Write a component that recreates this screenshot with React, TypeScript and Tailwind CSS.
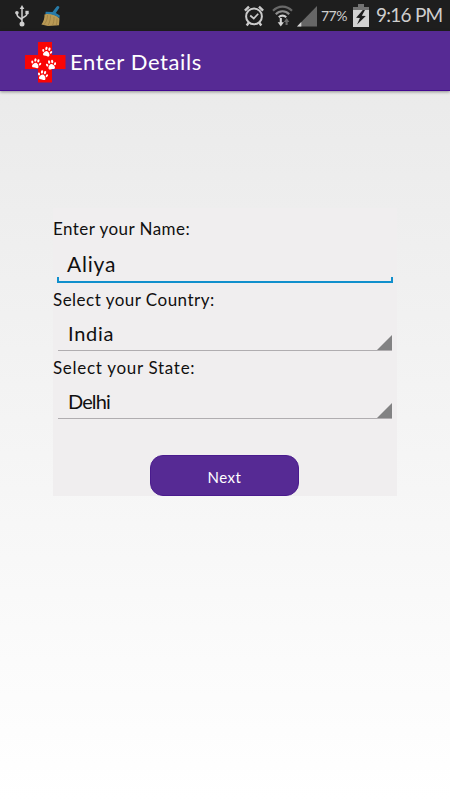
import React from "react";

function UsbIcon() {
  return (
    <svg className="ml-[15px] h-[22px] w-[14px] shrink-0" viewBox="0 0 14 22" fill="none" stroke="#cfcfcf" strokeWidth="1.5">
      <path d="M7 3v16M7 15.5C7 12.5 1.9 13.5 1.9 8.5M7 14c0-2.6 5.1-1.4 5.1-6" />
      <path d="M7 0 9.3 4H4.7Z" fill="#cfcfcf" stroke="none" />
      <circle cx="7" cy="19.1" r="2.5" fill="#cfcfcf" stroke="none" />
      <circle cx="1.9" cy="7.8" r="1.8" fill="#cfcfcf" stroke="none" />
      <path d="M10.4 5.8h3.3v3.3h-3.3z" fill="#cfcfcf" stroke="none" />
    </svg>
  );
}

function BroomIcon() {
  return (
    <svg className="ml-[12px] h-[22px] w-[21px] shrink-0" viewBox="0 0 21 22">
      <path d="M3.5 9.5C8 8 14 9 18.5 13.5L18 20.3 7 21 .4 19.5C2.6 16.5 3.7 13 3.5 9.5Z" fill="#b99a55" />
      <path d="M6.5 10c0 4-1.2 7-3.6 9.7M9.5 10.5c0 4-1 7.5-2.6 10M13 12c.2 3-.5 6-1.5 8.5M16 13.5c.2 2.5-.2 5-.8 6.8" stroke="#967a40" strokeWidth=".7" fill="none" />
      <path d="M4.7 6.8 11.5 7l4-5.3c1-1.3 3.5-.4 2.7 1.2L14.8 8l4 2.4-.4 2.8C14 9.5 9 8.5 4.4 9Z" fill="#287ba8" />
    </svg>
  );
}

function AlarmIcon() {
  return (
    <svg className="h-[22px] w-[20px] shrink-0" viewBox="0 0 20 22" fill="none" stroke="#cbcbcb" strokeWidth="2">
      <circle cx="10" cy="11.4" r="7.9" />
      <path d="m6.2 10.5 3.6 3 4.4-4.8" strokeWidth="1.7" />
      <path d="M.9 5.6 5 1.6M19.1 5.6 15 1.6M4.7 17.8l-2 2.7M15.3 17.8l2 2.7" strokeWidth="2.4" />
    </svg>
  );
}

function WifiIcon() {
  return (
    <svg className="ml-[8px] h-[22px] w-[21px] shrink-0" viewBox="0 0 21 22" fill="none" strokeWidth="2.1">
      <path d="M1 5.8c5.2-5.6 13.8-5.6 19 0" stroke="#696969" />
      <path d="M3.8 9.2c3.7-3.9 9.7-3.9 13.4 0" stroke="#8e8e8e" />
      <path d="M6.8 12.3c2.1-2.2 5.3-2.2 7.4 0" stroke="#cfcfcf" />
      <path d="M8.8 13v5.5" stroke="#d5d5d5" />
      <path d="M5.7 17.3h6.2l-3.1 4.2Z" fill="#d5d5d5" />
      <path d="M14.6 20v-4" stroke="#6b6b6b" />
      <path d="m11.8 16.9 2.8-3.8 2.8 3.8Z" fill="#6b6b6b" />
    </svg>
  );
}

function SignalIcon() {
  return (
    <svg className="ml-[4px] h-[22px] w-[21px] shrink-0" viewBox="0 0 21 22">
      <path d="M20 1v20.5H0Z" fill="#666" />
      <path d="M4.3 17v4.5H0Z" fill="#d5d5d5" />
    </svg>
  );
}

function BatteryIcon() {
  return (
    <svg className="ml-[6px] h-[23px] w-[16px] shrink-0" viewBox="0 0 16 23">
      <path d="M5 0h6v3h5v5H0V3h5Z" fill="#737373" />
      <path d="M0 6h16v17H0Z" fill="#d2d2d2" />
      <path d="m9.8 6-6.7 7.8 3.8.3-2.8 6.5 8.7-8.5-4-.3L12 6Z" fill="#1d1d1d" />
    </svg>
  );
}

function Paw({ x, y, turn }: { x: number; y: number; turn: number }) {
  return (
    <g transform={`translate(${x} ${y}) rotate(${turn})`} fill="#fff">
      <path d="M0-.9c1.4 0 3.3 2.2 3.3 3.7 0 1.9-1.9 1.5-3.3 1.2-1.4.3-3.3.7-3.3-1.2C-3.3 1.3-1.4-.9 0-.9Z" />
      <ellipse cx="-1.5" cy="-3.3" rx="1.1" ry="1.7" />
      <ellipse cx="1.6" cy="-3.3" rx="1.1" ry="1.7" />
      <ellipse cx="-4" cy="-.6" rx="1" ry="1.5" transform="rotate(-25 -4 -.6)" />
      <ellipse cx="4" cy="-.6" rx="1" ry="1.5" transform="rotate(25 4 -.6)" />
    </g>
  );
}

function Logo() {
  return (
    <svg className="h-[41px] w-[41px] shrink-0" viewBox="0 0 41 41">
      <path d="M13 0h14v13h13.5v14H27v13.5H13V27H0V13h13Z" fill="#f90505" />
      <Paw x={22} y={10} turn={15} />
      <Paw x={11} y={21.6} turn={15} />
      <Paw x={26.2} y={23} turn={-10} />
      <Paw x={17.8} y={33.5} turn={12} />
    </svg>
  );
}

function Spinner({ value, spacing }: { value: string; spacing: string }) {
  return (
    <div className="mx-[5px] flex h-[36px] items-end justify-between border-b border-[#b0adb0]">
      <span className={`pb-[4px] pl-[10px] text-[20px] leading-[26px] ${spacing}`}>{value}</span>
      <svg className="h-[15px] w-[15px]" viewBox="0 0 15 15">
        <path d="M15 0v15H0Z" fill="#828283" />
      </svg>
    </div>
  );
}

export default function App() {
  return (
    <div className="flex h-[800px] w-[450px] flex-col overflow-hidden bg-linear-to-b from-[#e8e8e8] to-white font-[Lato,sans-serif] text-[#101010]">
      <header className="flex h-[31px] shrink-0 items-center bg-[#1e1e1e] text-[#cecece]">
        <UsbIcon />
        <BroomIcon />
        <div className="ml-auto flex items-center">
          <AlarmIcon />
          <WifiIcon />
          <SignalIcon />
          <span className="ml-[3px] w-[26px] text-[14px] leading-[20px] tracking-[-0.5px] whitespace-nowrap">77%</span>
          <BatteryIcon />
          <span className="ml-[7px] w-[74px] pb-px text-[19px] leading-[26px] tracking-[-0.75px] whitespace-nowrap">9:16 PM</span>
        </div>
      </header>
      <div className="flex h-[60px] shrink-0 items-center border-b border-[#430891] bg-[#562a94] pt-[3px] pl-[25px] text-white shadow-[0_1px_3px_rgba(0,0,0,0.4)]">
        <Logo />
        <h1 className="ml-[4px] text-[22px] leading-[28px] tracking-[0.6px]">Enter Details</h1>
      </div>
      <main className="mt-[117px] ml-[53px] flex h-[288px] w-[344px] flex-col bg-[#f0eeef]">
        <label className="mt-[9px] h-[25px] text-[17px] leading-[24px] tracking-[0.45px]">Enter your Name:</label>
        <div className="mx-[4px] mt-[8px] flex h-[33px] flex-col">
          <span className="h-[27px] pl-[10px] text-[21px] leading-[28px] tracking-[0.8px]">Aliya</span>
          <div className="h-[6px] border-x-2 border-b-2 border-[#108fcc]" />
        </div>
        <label className="mt-[5px] h-[25px] text-[17px] leading-[24px] tracking-[0.48px]">Select your Country:</label>
        <div className="mt-[2px]"><Spinner value="India" spacing="tracking-[0.7px]" /></div>
        <label className="mt-[5px] h-[25px] text-[17px] leading-[24px] tracking-[0.7px]">Select your State:</label>
        <div className="mt-[2px]"><Spinner value="Delhi" spacing="tracking-[-0.9px]" /></div>
        <button className="mt-auto ml-[97px] h-[41px] w-[149px] rounded-[13px] border border-[#4a1b8e] bg-[#562a94] pt-[2px] text-[15px] leading-[20px] tracking-[0.5px] text-white">Next</button>
      </main>
    </div>
  );
}
